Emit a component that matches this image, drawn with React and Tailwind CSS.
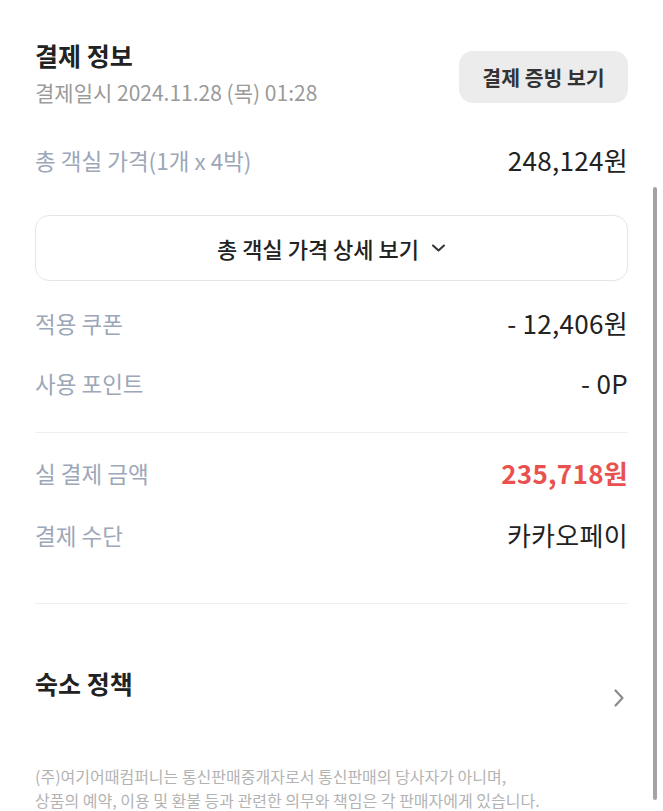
import React from "react";

const font = { fontFamily: '"Noto Sans CJK KR", "Noto Sans", sans-serif' };

function Row({ label, value, valueClass = "text-[#222222] font-normal" }) {
  return (
    <div className="flex h-[30px] items-center justify-between">
      <span className="text-[22.5px] leading-[30px] text-[#9ca7b8]">{label}</span>
      <span className={`text-[26px] leading-[30px] tracking-[0.3px] ${valueClass}`}>{value}</span>
    </div>
  );
}

export default function App() {
  return (
    <div className="relative h-[811px] w-[663px] overflow-hidden bg-white" style={font}>
      <div className="flex flex-col px-[35px] pt-[40px]">
        <div className="flex items-start justify-between">
          <div className="flex flex-col">
            <div className="h-[30px] text-[25px] font-bold leading-[30px] text-[#222222]">결제 정보</div>
            <div className="mt-[8px] h-[28px] text-[21px] leading-[28px] text-[#9a9a9a]">결제일시 2024.11.28 (목) 01:28</div>
          </div>
          <button className="mt-[11px] flex h-[52px] w-[169px] items-center justify-center rounded-[14px] bg-[#ececec] text-[20.5px] font-bold text-[#333333]">
            결제 증빙 보기
          </button>
        </div>

        <div className="mt-[39px]">
          <Row label="총 객실 가격(1개 x 4박)" value="248,124원" />
        </div>

        <button className="mt-[40px] flex h-[66px] w-full items-center justify-center gap-[12px] rounded-[14px] border border-[#e6e6e6] bg-white text-[22px] font-medium text-[#222222]">
          <span>총 객실 가격 상세 보기</span>
          <svg width="15" height="10" viewBox="0 0 15 10" fill="none">
            <path d="M2 2.5L7.5 7.5L13 2.5" stroke="#333" strokeWidth="2" strokeLinecap="round" strokeLinejoin="round" />
          </svg>
        </button>

        <div className="mt-[27px]">
          <Row label="적용 쿠폰" value="- 12,406원" />
        </div>
        <div className="mt-[30px]">
          <Row label="사용 포인트" value="- 0P" />
        </div>

        <div className="mt-[34px] h-px bg-[#efefef]" />

        <div className="mt-[25px]">
          <Row label="실 결제 금액" value="235,718원" valueClass="text-[#e9514f] font-semibold" />
        </div>
        <div className="mt-[32px]">
          <Row label="결제 수단" value="카카오페이" />
        </div>

        <div className="mt-[53px] h-px bg-[#efefef]" />

        <div className="mt-[64px] flex h-[30px] items-start justify-between">
          <div className="h-[30px] text-[25px] font-bold leading-[30px] text-[#222222]">숙소 정책</div>
          <svg className="mt-[20px] mr-[3px] shrink-0" width="12" height="20" viewBox="0 0 12 20" fill="none">
            <path d="M2.5 2.5L9.5 10L2.5 17.5" stroke="#8a8a8a" strokeWidth="2.2" strokeLinecap="round" strokeLinejoin="round" />
          </svg>
        </div>

        <div className="mt-[66px] text-[16px] leading-[24px] text-[#b3b3b3]">
          <div className="whitespace-nowrap">(주)여기어때컴퍼니는 통신판매중개자로서 통신판매의 당사자가 아니며,</div>
          <div className="whitespace-nowrap">상품의 예약, 이용 및 환불 등과 관련한 의무와 책임은 각 판매자에게 있습니다.</div>
        </div>
      </div>

      <div className="absolute left-[653px] top-[187px] h-[613px] w-[4px] rounded-full bg-[#a3a3a3]" />
    </div>
  );
}
